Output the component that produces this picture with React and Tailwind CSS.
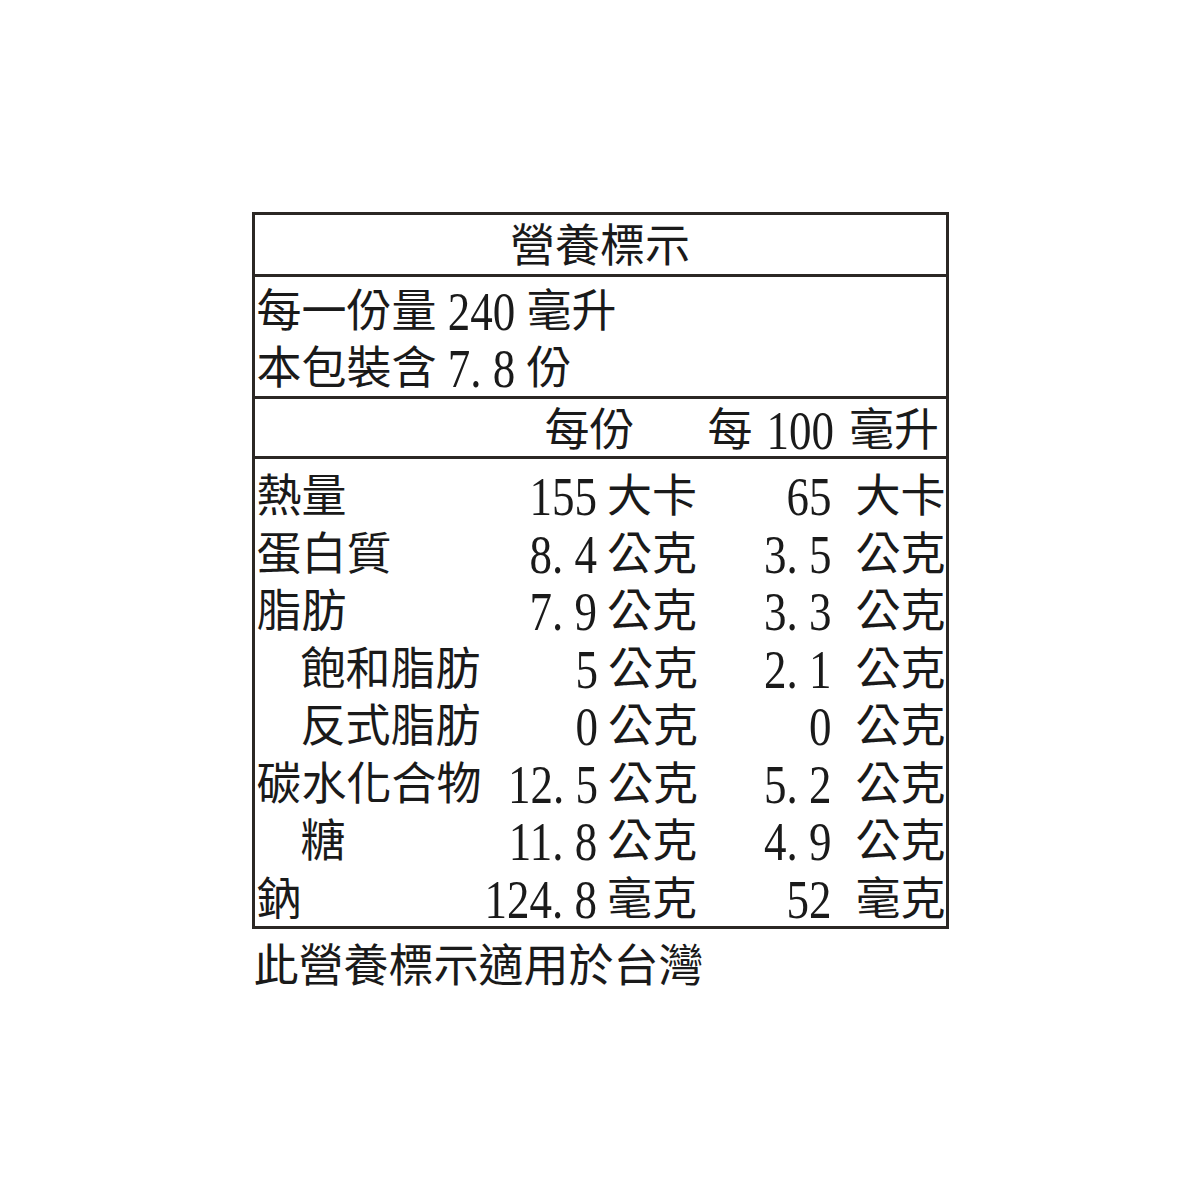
import React from 'react';

const rows = [
    { label: '熱量', indent: false, a: '155', ua: '大卡', b: '65', ub: '大卡' },
    { label: '蛋白質', indent: false, a: '8.4', ua: '公克', b: '3.5', ub: '公克' },
    { label: '脂肪', indent: false, a: '7.9', ua: '公克', b: '3.3', ub: '公克' },
    { label: '飽和脂肪', indent: true, a: '5', ua: '公克', b: '2.1', ub: '公克' },
    { label: '反式脂肪', indent: true, a: '0', ua: '公克', b: '0', ub: '公克' },
    { label: '碳水化合物', indent: false, a: '12.5', ua: '公克', b: '5.2', ub: '公克' },
    { label: '糖', indent: true, a: '11.8', ua: '公克', b: '4.9', ub: '公克' },
    { label: '鈉', indent: false, a: '124.8', ua: '毫克', b: '52', ub: '毫克' },
];

// tall, narrow digits like the printed label; the period takes a half-width cell
const Num = ({ v, className = '' }) => (
    <span className={`inline-block origin-center scale-y-[1.2] ${className}`}>
        {v.split('').map((c, i) =>
            c === '.' ? (
                <span key={i} className="inline-block w-[0.5em] text-left">.</span>
            ) : (
                <span key={i}>{c}</span>
            )
        )}
    </span>
);

const App = () => {
    return (
        <div className="min-h-[1200px] bg-white pt-[212px] font-['Liberation_Serif','Noto_Sans_CJK_TC',serif] text-[45px] text-[#1a1a1a]">
            <div className="mx-auto w-[697px]">
                <div className="border-[3px] border-[#2b2724]">
                    <div className="h-[62px] border-b-[3px] border-[#2b2724] pt-[6px] text-center leading-[53px]">
                        營養標示
                    </div>

                    <div className="h-[122px] border-b-[3px] border-[#2b2724] pl-[2px] pt-[7px] leading-[57px] whitespace-nowrap">
                        <div>
                            每一份量 <Num v="240" /> 毫升
                        </div>
                        <div>
                            本包裝含 <Num v="7.8" /> 份
                        </div>
                    </div>

                    <div className="flex h-[60px] border-b-[3px] border-[#2b2724] pl-[2px] pt-[8px] leading-[49px] whitespace-nowrap">
                        <div className="w-[451px] pl-[288px]">每份</div>
                        <div>
                            每<Num v="100" className="ml-[14px]" />
                            <span className="ml-[15px]">毫升</span>
                        </div>
                    </div>

                    <div className="pt-[7px] pl-[2px]">
                        {rows.map((r) => (
                            <div key={r.label} className="flex h-[57.5px] pt-[5px] leading-[52.5px] whitespace-nowrap">
                                <div className={r.indent ? 'w-[223px] pl-[44px]' : 'w-[223px]'}>{r.label}</div>
                                <div className="w-[120px] text-right">
                                    <Num v={r.a} />
                                </div>
                                <div className="w-[140px] pl-[10px]">{r.ua}</div>
                                <div className="w-[96px] text-right">
                                    <Num v={r.b} />
                                </div>
                                <div className="flex-1 pl-[24px]">{r.ub}</div>
                            </div>
                        ))}
                    </div>
                </div>

                <div className="mt-[10px] pl-[2px] leading-[57px]">此營養標示適用於台灣</div>
            </div>
        </div>
    );
};

export default App;
